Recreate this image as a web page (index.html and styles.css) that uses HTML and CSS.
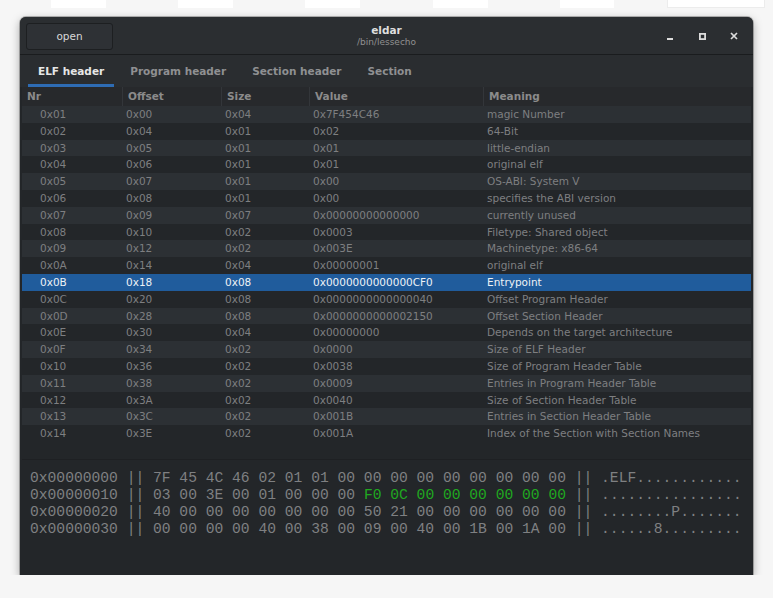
FILE: index.html
```html
<!DOCTYPE html>
<html>
<head>
<meta charset="utf-8">
<link rel="stylesheet" href="styles.css">
</head>
<body>
<div class="backdrop">
  <span class="blk b1"></span><span class="blk b2"></span><span class="blk b3"></span><span class="blk b4"></span><span class="blk b5"></span><span class="blk b6"></span>
</div>
<div class="window">
  <div class="headerbar">
    <div class="left"><button class="open-btn">open</button></div>
    <div class="titles">
      <div class="title">eldar</div>
      <div class="subtitle">/bin/lessecho</div>
    </div>
    <div class="controls">
      <svg class="ctl" width="12" height="12" viewBox="0 0 12 12"><rect x="3" y="8" width="6" height="2" fill="#dcdcdc"/></svg>
      <svg class="ctl" width="12" height="12" viewBox="0 0 12 12"><rect x="3.9" y="3.9" width="5.2" height="5.2" fill="none" stroke="#dcdcdc" stroke-width="1.8"/></svg>
      <svg class="ctl" width="12" height="12" viewBox="0 0 12 12"><path d="M3 3 L9 9 M9 3 L3 9" stroke="#dcdcdc" stroke-width="1.7"/></svg>
    </div>
  </div>
  <div class="tabbar">
    <div class="tab active">ELF header</div>
    <div class="tab">Program header</div>
    <div class="tab">Section header</div>
    <div class="tab">Section</div>
  </div>
  <div class="table">
    <div class="thead">
      <div class="th first">Nr</div><div class="th">Offset</div><div class="th">Size</div><div class="th">Value</div><div class="th">Meaning</div>
    </div>
    <div class="row"><div class="nr">0x01</div><div>0x00</div><div>0x04</div><div>0x7F454C46</div><div>magic Number</div></div>
    <div class="row"><div class="nr">0x02</div><div>0x04</div><div>0x01</div><div>0x02</div><div>64-Bit</div></div>
    <div class="row"><div class="nr">0x03</div><div>0x05</div><div>0x01</div><div>0x01</div><div>little-endian</div></div>
    <div class="row"><div class="nr">0x04</div><div>0x06</div><div>0x01</div><div>0x01</div><div>original elf</div></div>
    <div class="row"><div class="nr">0x05</div><div>0x07</div><div>0x01</div><div>0x00</div><div>OS-ABI: System V</div></div>
    <div class="row"><div class="nr">0x06</div><div>0x08</div><div>0x01</div><div>0x00</div><div>specifies the ABI version</div></div>
    <div class="row"><div class="nr">0x07</div><div>0x09</div><div>0x07</div><div>0x00000000000000</div><div>currently unused</div></div>
    <div class="row"><div class="nr">0x08</div><div>0x10</div><div>0x02</div><div>0x0003</div><div>Filetype: Shared object</div></div>
    <div class="row"><div class="nr">0x09</div><div>0x12</div><div>0x02</div><div>0x003E</div><div>Machinetype: x86-64</div></div>
    <div class="row"><div class="nr">0x0A</div><div>0x14</div><div>0x04</div><div>0x00000001</div><div>original elf</div></div>
    <div class="row selected"><div class="nr">0x0B</div><div>0x18</div><div>0x08</div><div>0x0000000000000CF0</div><div>Entrypoint</div></div>
    <div class="row"><div class="nr">0x0C</div><div>0x20</div><div>0x08</div><div>0x0000000000000040</div><div>Offset Program Header</div></div>
    <div class="row"><div class="nr">0x0D</div><div>0x28</div><div>0x08</div><div>0x0000000000002150</div><div>Offset Section Header</div></div>
    <div class="row"><div class="nr">0x0E</div><div>0x30</div><div>0x04</div><div>0x00000000</div><div>Depends on the target architecture</div></div>
    <div class="row"><div class="nr">0x0F</div><div>0x34</div><div>0x02</div><div>0x0000</div><div>Size of ELF Header</div></div>
    <div class="row"><div class="nr">0x10</div><div>0x36</div><div>0x02</div><div>0x0038</div><div>Size of Program Header Table</div></div>
    <div class="row"><div class="nr">0x11</div><div>0x38</div><div>0x02</div><div>0x0009</div><div>Entries in Program Header Table</div></div>
    <div class="row"><div class="nr">0x12</div><div>0x3A</div><div>0x02</div><div>0x0040</div><div>Size of Section Header Table</div></div>
    <div class="row"><div class="nr">0x13</div><div>0x3C</div><div>0x02</div><div>0x001B</div><div>Entries in Section Header Table</div></div>
    <div class="row"><div class="nr">0x14</div><div>0x3E</div><div>0x02</div><div>0x001A</div><div>Index of the Section with Section Names</div></div>
  </div>
  <div class="hex">
    <div class="hl">0x00000000 || 7F 45 4C 46 02 01 01 00 00 00 00 00 00 00 00 00 || .ELF............</div>
    <div class="hl"><span>0x00000010 || 03 00 3E 00 01 00 00 00 </span><span class="g">F0 0C 00 00 00 00 00 00</span><span> || ................</span></div>
    <div class="hl">0x00000020 || 40 00 00 00 00 00 00 00 50 21 00 00 00 00 00 00 || ........P.......</div>
    <div class="hl">0x00000030 || 00 00 00 00 40 00 38 00 09 00 40 00 1B 00 1A 00 || ......8.........</div>
  </div>
</div>
</body>
</html>
```
FILE: styles.css
```css
html, body {
  margin: 0;
  padding: 0;
  background: #f6f6f6;
  font-family: "DejaVu Sans", sans-serif;
}
.backdrop {
  height: 8px;
  position: relative;
}
.blk {
  position: absolute;
  top: 0;
  height: 8px;
  background: #ffffff;
}
.b1 { left: 51px; width: 55px; }
.b2 { left: 178px; width: 55px; }
.b3 { left: 305px; width: 55px; }
.b4 { left: 433px; width: 55px; }
.b5 { left: 560px; width: 54px; }
.b6 { left: 667px; width: 96px; border: 1px solid #ececec; border-top: 0; height: 7px; }

.window {
  margin: 9px 0 0 20px;
  width: 733px;
  height: 558px;
  background: #232629;
  border-radius: 6px 6px 0 0;
  box-shadow: 0 3px 10px rgba(0,0,0,0.35), 0 0 0 1px rgba(0,0,0,0.25);
  display: flex;
  flex-direction: column;
  overflow: hidden;
}
.headerbar {
  height: 37px;
  flex: none;
  border-bottom: 1px solid #1a1c1e;
  background: #2b2e31;
  display: grid;
  grid-template-columns: 1fr auto 1fr;
  align-items: center;
  padding: 0 6px;
}
.left {
  display: flex;
}
.open-btn {
  width: 87px;
  height: 27px;
  margin-top: 1px;
  background: #2e3135;
  border: 1px solid #1d1f21;
  border-radius: 3px;
  color: #d8d8d8;
  font-family: "DejaVu Sans", sans-serif;
  font-size: 10.5px;
  padding: 0;
}
.titles {
  text-align: center;
  padding-top: 1px;
}
.title {
  color: #dedede;
  font-weight: bold;
  font-size: 10.5px;
  line-height: 12px;
}
.subtitle {
  color: #909090;
  font-size: 9px;
  line-height: 12px;
}
.controls {
  display: flex;
  justify-content: flex-end;
  gap: 20px;
  margin-right: 7px;
  align-items: center;
  margin-top: 1px;
}
.tabbar {
  height: 32px;
  flex: none;
  background: #2a2d30;
  display: flex;
  gap: 6px;
  padding-left: 8px;
}
.tab {
  padding: 0 10px;
  font-size: 10.5px;
  font-weight: bold;
  color: #8f9092;
  line-height: 32px;
  height: 29px;
  border-bottom: 3px solid transparent;
}
.tab.active {
  color: #e6e6e6;
  border-bottom-color: #2e6cb4;
}
.table {
  margin: 0 2px;
  height: 372px;
  flex: none;
  border-bottom: 1px solid #1e2023;
  font-size: 10.5px;
}
.thead, .row {
  display: grid;
  grid-template-columns: 100px 99px 88px 174px 1fr;
}
.thead {
  height: 19px;
  background: #27292c;
}
.th {
  font-weight: bold;
  color: #8b8b8b;
  line-height: 18px;
  padding-left: 5px;
  border-left: 1px solid #33363a;
}
.th.first {
  border-left: 0;
}
.row {
  height: 16.8px;
  line-height: 16.8px;
  color: #7e7f81;
}
.row > div {
  padding-left: 4px;
  white-space: nowrap;
}
.row > .nr {
  padding-left: 18px;
}
.row:nth-child(even) {
  background: #2c3034;
}
.row:nth-child(odd) {
  background: #232629;
}
.row.selected {
  background: #205c9c;
  color: #eef2f6;
}
.hex {
  flex: 1;
  background: #232629;
  padding: 10px 0 0 10px;
  font-family: "Liberation Mono", monospace;
  font-size: 14.65px;
  line-height: 17px;
  color: #7f8082;
}
.hl {
  white-space: pre;
  height: 17px;
}
.hex .g {
  color: #20a820;
}
```
